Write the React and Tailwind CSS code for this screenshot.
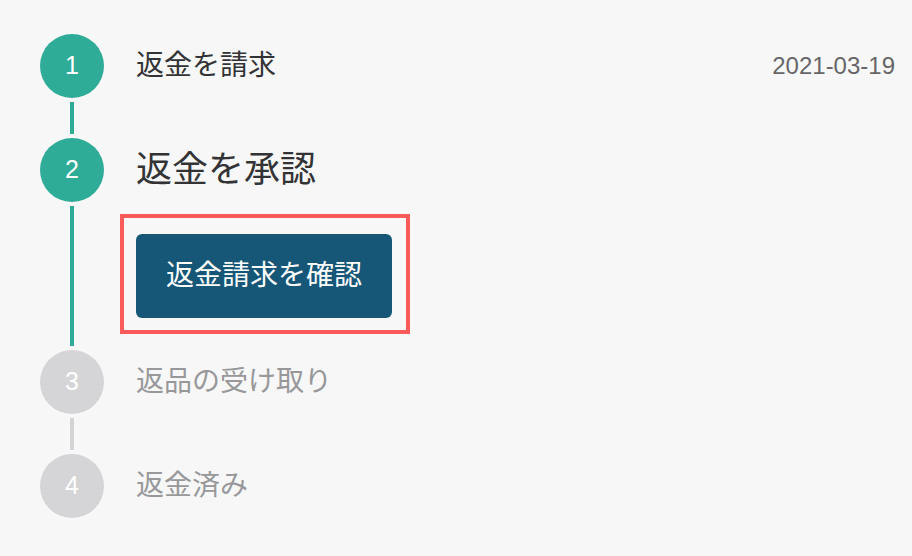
const steps = [
  { no: 1, title: "返金を請求", date: "2021-03-19", state: "done" },
  { no: 2, title: "返金を承認", state: "active" },
  { no: 3, title: "返品の受け取り", state: "todo" },
  { no: 4, title: "返金済み", state: "todo" },
];

function StepCircle({ no, state }) {
  const bg = state === "todo" ? "bg-[#d5d5d7]" : "bg-[#2eac97]";
  return (
    <div className={`flex h-16 w-16 shrink-0 items-center justify-center rounded-full text-[25px] text-white ${bg}`}>
      {no}
    </div>
  );
}

function Step({ step, isLast }) {
  const lineColor = step.state === "todo" ? "bg-[#d5d5d7]" : "bg-[#2eac97]";
  const titleClass =
    step.state === "active"
      ? "text-[36px] text-[#333336]"
      : step.state === "done"
      ? "text-[28px] text-[#333336]"
      : "text-[28px] text-[#98989b]";
  const padBottom = isLast ? "" : step.state === "active" ? "pb-4" : "pb-10";

  return (
    <div className="flex">
      <div className="flex w-16 flex-col items-center">
        <StepCircle no={step.no} state={step.state} />
        {!isLast && <div className={`my-1 w-1 flex-1 ${lineColor}`} />}
      </div>
      <div className={`ml-8 flex-1 ${padBottom}`}>
        <div className="flex h-16 items-center justify-between">
          <span className={`leading-none ${titleClass}`}>{step.title}</span>
          {step.date && <span className="mr-[17px] text-[24px] text-[#666668]">{step.date}</span>}
        </div>
        {step.state === "active" && (
          <div className="-ml-4 mt-3 flex h-[120px] w-[290px] border-4 border-[#fa5a5a] pl-3 pt-4">
            <button className="h-[84px] w-[256px] rounded-md bg-[#165677] text-[28px] text-white">
              返金請求を確認
            </button>
          </div>
        )}
      </div>
    </div>
  );
}

export default function App() {
  return (
    <div
      className="h-[556px] w-[912px] bg-[#f7f7f7] pl-10 pt-[34px]"
      style={{ fontFamily: '"Liberation Sans", "Noto Sans CJK JP", sans-serif' }}
    >
      {steps.map((step, i) => (
        <Step key={step.no} step={step} isLast={i === steps.length - 1} />
      ))}
    </div>
  );
}
